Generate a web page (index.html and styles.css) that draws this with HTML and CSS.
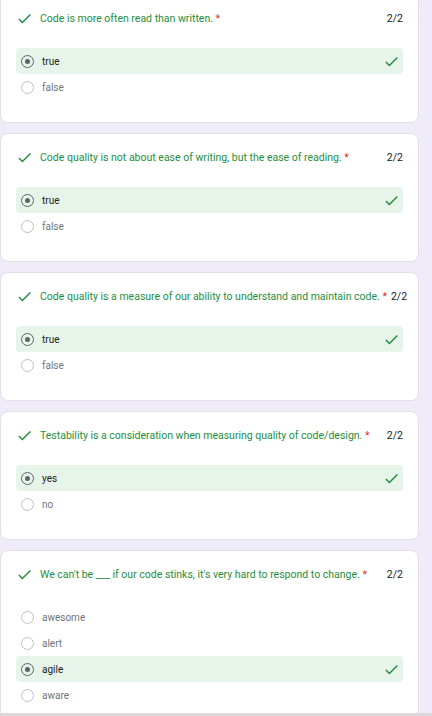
FILE: index.html
```html
<!DOCTYPE html>
<html>
<head>
<meta charset="utf-8">
<link rel="stylesheet" href="styles.css">
</head>
<body>
<div class="viewport">
  <div class="list">
    <div class="card">
      <div class="q-row">
        <svg class="q-check" viewBox="0 0 24 24"><path d="M9 16.17L4.83 12l-1.42 1.41L9 19 21 7l-1.41-1.41z"/></svg>
        <div class="q-text">Code is more often read than written. <span class="req">*</span></div>
        <div class="score">2/2</div>
      </div>
      <div class="options">
        <div class="opt correct"><span class="radio on"></span><span class="opt-label">true</span><svg class="opt-check" viewBox="0 0 24 24"><path d="M9 16.17L4.83 12l-1.42 1.41L9 19 21 7l-1.41-1.41z"/></svg></div>
        <div class="opt"><span class="radio"></span><span class="opt-label">false</span></div>
      </div>
    </div>
    <div class="card">
      <div class="q-row">
        <svg class="q-check" viewBox="0 0 24 24"><path d="M9 16.17L4.83 12l-1.42 1.41L9 19 21 7l-1.41-1.41z"/></svg>
        <div class="q-text">Code quality is not about ease of writing, but the ease of reading. <span class="req">*</span></div>
        <div class="score">2/2</div>
      </div>
      <div class="options">
        <div class="opt correct"><span class="radio on"></span><span class="opt-label">true</span><svg class="opt-check" viewBox="0 0 24 24"><path d="M9 16.17L4.83 12l-1.42 1.41L9 19 21 7l-1.41-1.41z"/></svg></div>
        <div class="opt"><span class="radio"></span><span class="opt-label">false</span></div>
      </div>
    </div>
    <div class="card">
      <div class="q-row">
        <svg class="q-check" viewBox="0 0 24 24"><path d="M9 16.17L4.83 12l-1.42 1.41L9 19 21 7l-1.41-1.41z"/></svg>
        <div class="q-text">Code quality is a measure of our ability to understand and maintain code. <span class="req">*</span></div>
        <div class="score">2/2</div>
      </div>
      <div class="options">
        <div class="opt correct"><span class="radio on"></span><span class="opt-label">true</span><svg class="opt-check" viewBox="0 0 24 24"><path d="M9 16.17L4.83 12l-1.42 1.41L9 19 21 7l-1.41-1.41z"/></svg></div>
        <div class="opt"><span class="radio"></span><span class="opt-label">false</span></div>
      </div>
    </div>
    <div class="card">
      <div class="q-row">
        <svg class="q-check" viewBox="0 0 24 24"><path d="M9 16.17L4.83 12l-1.42 1.41L9 19 21 7l-1.41-1.41z"/></svg>
        <div class="q-text">Testability is a consideration when measuring quality of code/design. <span class="req">*</span></div>
        <div class="score">2/2</div>
      </div>
      <div class="options">
        <div class="opt correct"><span class="radio on"></span><span class="opt-label">yes</span><svg class="opt-check" viewBox="0 0 24 24"><path d="M9 16.17L4.83 12l-1.42 1.41L9 19 21 7l-1.41-1.41z"/></svg></div>
        <div class="opt"><span class="radio"></span><span class="opt-label">no</span></div>
      </div>
    </div>
    <div class="card">
      <div class="q-row">
        <svg class="q-check" viewBox="0 0 24 24"><path d="M9 16.17L4.83 12l-1.42 1.41L9 19 21 7l-1.41-1.41z"/></svg>
        <div class="q-text">We can't be ___ if our code stinks, it's very hard to respond to change. <span class="req">*</span></div>
        <div class="score">2/2</div>
      </div>
      <div class="options">
        <div class="opt"><span class="radio"></span><span class="opt-label">awesome</span></div>
        <div class="opt"><span class="radio"></span><span class="opt-label">alert</span></div>
        <div class="opt correct"><span class="radio on"></span><span class="opt-label">agile</span><svg class="opt-check" viewBox="0 0 24 24"><path d="M9 16.17L4.83 12l-1.42 1.41L9 19 21 7l-1.41-1.41z"/></svg></div>
        <div class="opt"><span class="radio"></span><span class="opt-label">aware</span></div>
      </div>
    </div>
  </div>
</div>
</body>
</html>
```
FILE: styles.css
```css
html, body {
  margin: 0;
  padding: 0;
}
body {
  font-family: Roboto, "Liberation Sans", Arial, sans-serif;
  background: #f0ebf8;
}
.viewport {
  height: 716px;
  overflow: hidden;
  box-sizing: border-box;
  border-bottom: 3px solid #dcd8da;
  background: #f0ebf8;
}
.list {
  display: flex;
  flex-direction: column;
  gap: 10px;
  margin-top: -6px;
  width: 419px;
}
.card {
  background: #fff;
  border-radius: 8px;
  border: 1px solid #e2dfe6;
  box-sizing: border-box;
  padding: 0 15px 24px 15px;
  height: 129px;
}
.card:last-child {
  height: auto;
}
.q-row {
  height: 46px;
  display: flex;
  align-items: center;
  margin-bottom: 7px;
}
.q-check {
  width: 17px;
  height: 17px;
  fill: #1e8e3e;
  flex: none;
  margin-right: 7px;
}
.q-text {
  flex: 1;
  font-size: 10.5px;
  color: #1e8e3e;
  white-space: nowrap;
}
.req {
  color: #d93025;
}
.score {
  font-size: 10.5px;
  color: #202124;
  flex: none;
  margin-left: 4px;
}
.options {
  display: flex;
  flex-direction: column;
}
.opt {
  height: 26px;
  display: flex;
  align-items: center;
  padding: 0 3px 0 5px;
  border-radius: 4px;
}
.opt.correct {
  background: #e6f4ea;
}
.radio {
  width: 13px;
  height: 13px;
  box-sizing: border-box;
  border: 1px solid #bdc1c6;
  border-radius: 50%;
  flex: none;
  display: flex;
  align-items: center;
  justify-content: center;
  margin-right: 8px;
}
.radio.on {
  border-color: #5f6368;
}
.radio.on::after {
  content: "";
  width: 5px;
  height: 5px;
  border-radius: 50%;
  background: #5f6368;
}
.opt-label {
  flex: 1;
  font-size: 10px;
  color: #70757a;
}
.opt.correct .opt-label {
  color: #202124;
}
.opt-check {
  width: 17px;
  height: 17px;
  fill: #1e8e3e;
  flex: none;
}
```
